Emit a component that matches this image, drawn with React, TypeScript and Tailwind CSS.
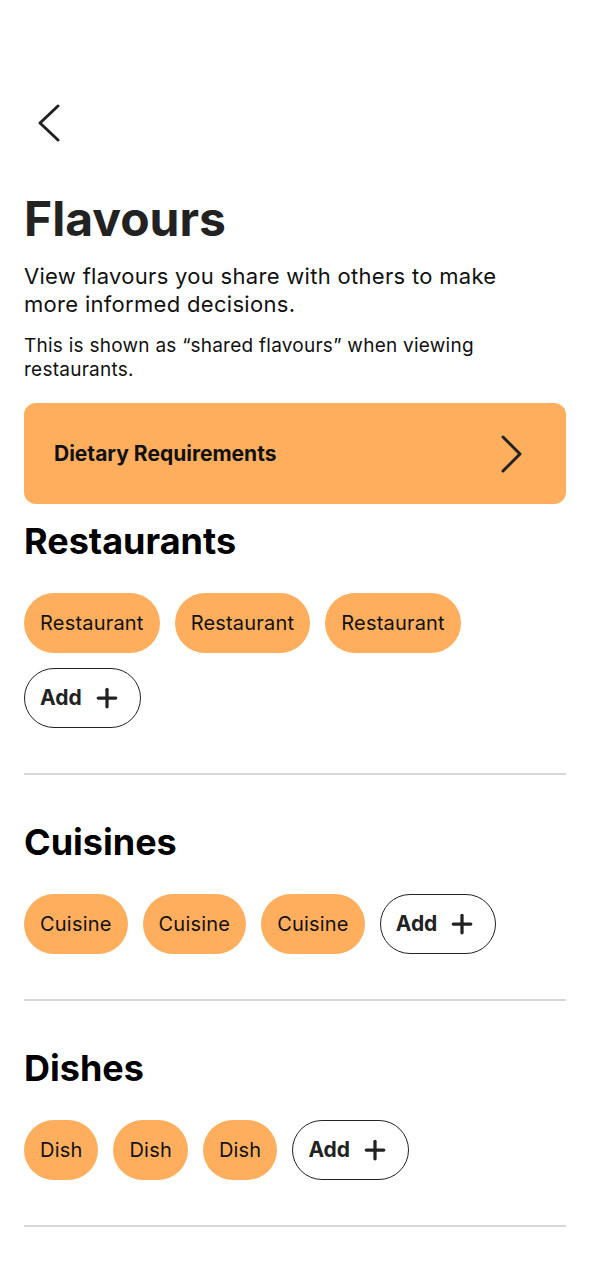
import { Plus } from "lucide-react";

const sections = [
  { title: "Restaurants", items: ["Restaurant", "Restaurant", "Restaurant"] },
  { title: "Cuisines", items: ["Cuisine", "Cuisine", "Cuisine"] },
  { title: "Dishes", items: ["Dish", "Dish", "Dish"] },
];

const Chip = ({ label }: { label: string }) => (
  <span className="h-[60px] px-4 flex items-center rounded-full bg-[#ffae5e] text-[20px] tracking-[0.2px] text-[#111]">
    {label}
  </span>
);

const AddChip = () => (
  <button className="h-[60px] pl-[15px] pr-[18px] flex items-center gap-[10px] rounded-full border-[1.5px] border-[#222] text-[21px] font-bold text-[#222]">
    Add
    <Plus size={30} strokeWidth={2.6} />
  </button>
);

const Flavours = () => {
  return (
    <div
      className="w-[590px] h-[1278px] overflow-hidden bg-white px-6 pt-[104px]"
      style={{ fontFamily: "Inter, 'Noto Sans', sans-serif" }}
    >
      <button className="block w-[40px] h-[38px]">
        <svg width="40" height="38" viewBox="0 0 40 38" fill="none">
          <path
            d="M34 2 L16 19 L34 36"
            stroke="#222"
            strokeWidth="3"
            strokeLinecap="round"
            strokeLinejoin="round"
          />
        </svg>
      </button>

      <h1 className="mt-[53px] text-[48px] leading-[48px] font-bold text-[#222]">
        Flavours
      </h1>
      <p className="mt-[19px] max-w-[510px] text-[22px] leading-[28px] tracking-[0.3px] text-[#111]">
        View flavours you share with others to make more informed decisions.
      </p>
      <p className="mt-[16px] text-[19px] leading-[24px] tracking-[0.25px] text-[#111]">
        This is shown as “shared flavours” when viewing restaurants.
      </p>

      <div className="mt-[21px] h-[101px] rounded-xl bg-[#ffae5e] flex items-center justify-between pl-[30px] pr-[44px]">
        <span className="text-[21px] font-bold text-[#111]">Dietary Requirements</span>
        <svg width="22" height="38" viewBox="0 0 22 38" fill="none">
          <path
            d="M3 2 L20 19 L3 36"
            stroke="#222"
            strokeWidth="3"
            strokeLinecap="round"
            strokeLinejoin="round"
          />
        </svg>
      </div>

      {sections.map((s, i) => (
        <section key={s.title} className={i === 0 ? "mt-[17px]" : "mt-[47px]"}>
          <h2 className="text-[36px] leading-[40px] font-bold text-black">{s.title}</h2>
          <div className="mt-[32px] flex flex-wrap gap-[15px]">
            {s.items.map((it, idx) => (
              <Chip key={idx} label={it} />
            ))}
            <AddChip />
          </div>
          <hr className="mt-[45px] border-0 h-[2px] bg-[#d6d6d6]" />
        </section>
      ))}

      <h2 className="mt-[47px] text-[36px] leading-[40px] font-bold text-black">Snacks</h2>
    </div>
  );
};

export default function App() {
  return <Flavours />;
}
